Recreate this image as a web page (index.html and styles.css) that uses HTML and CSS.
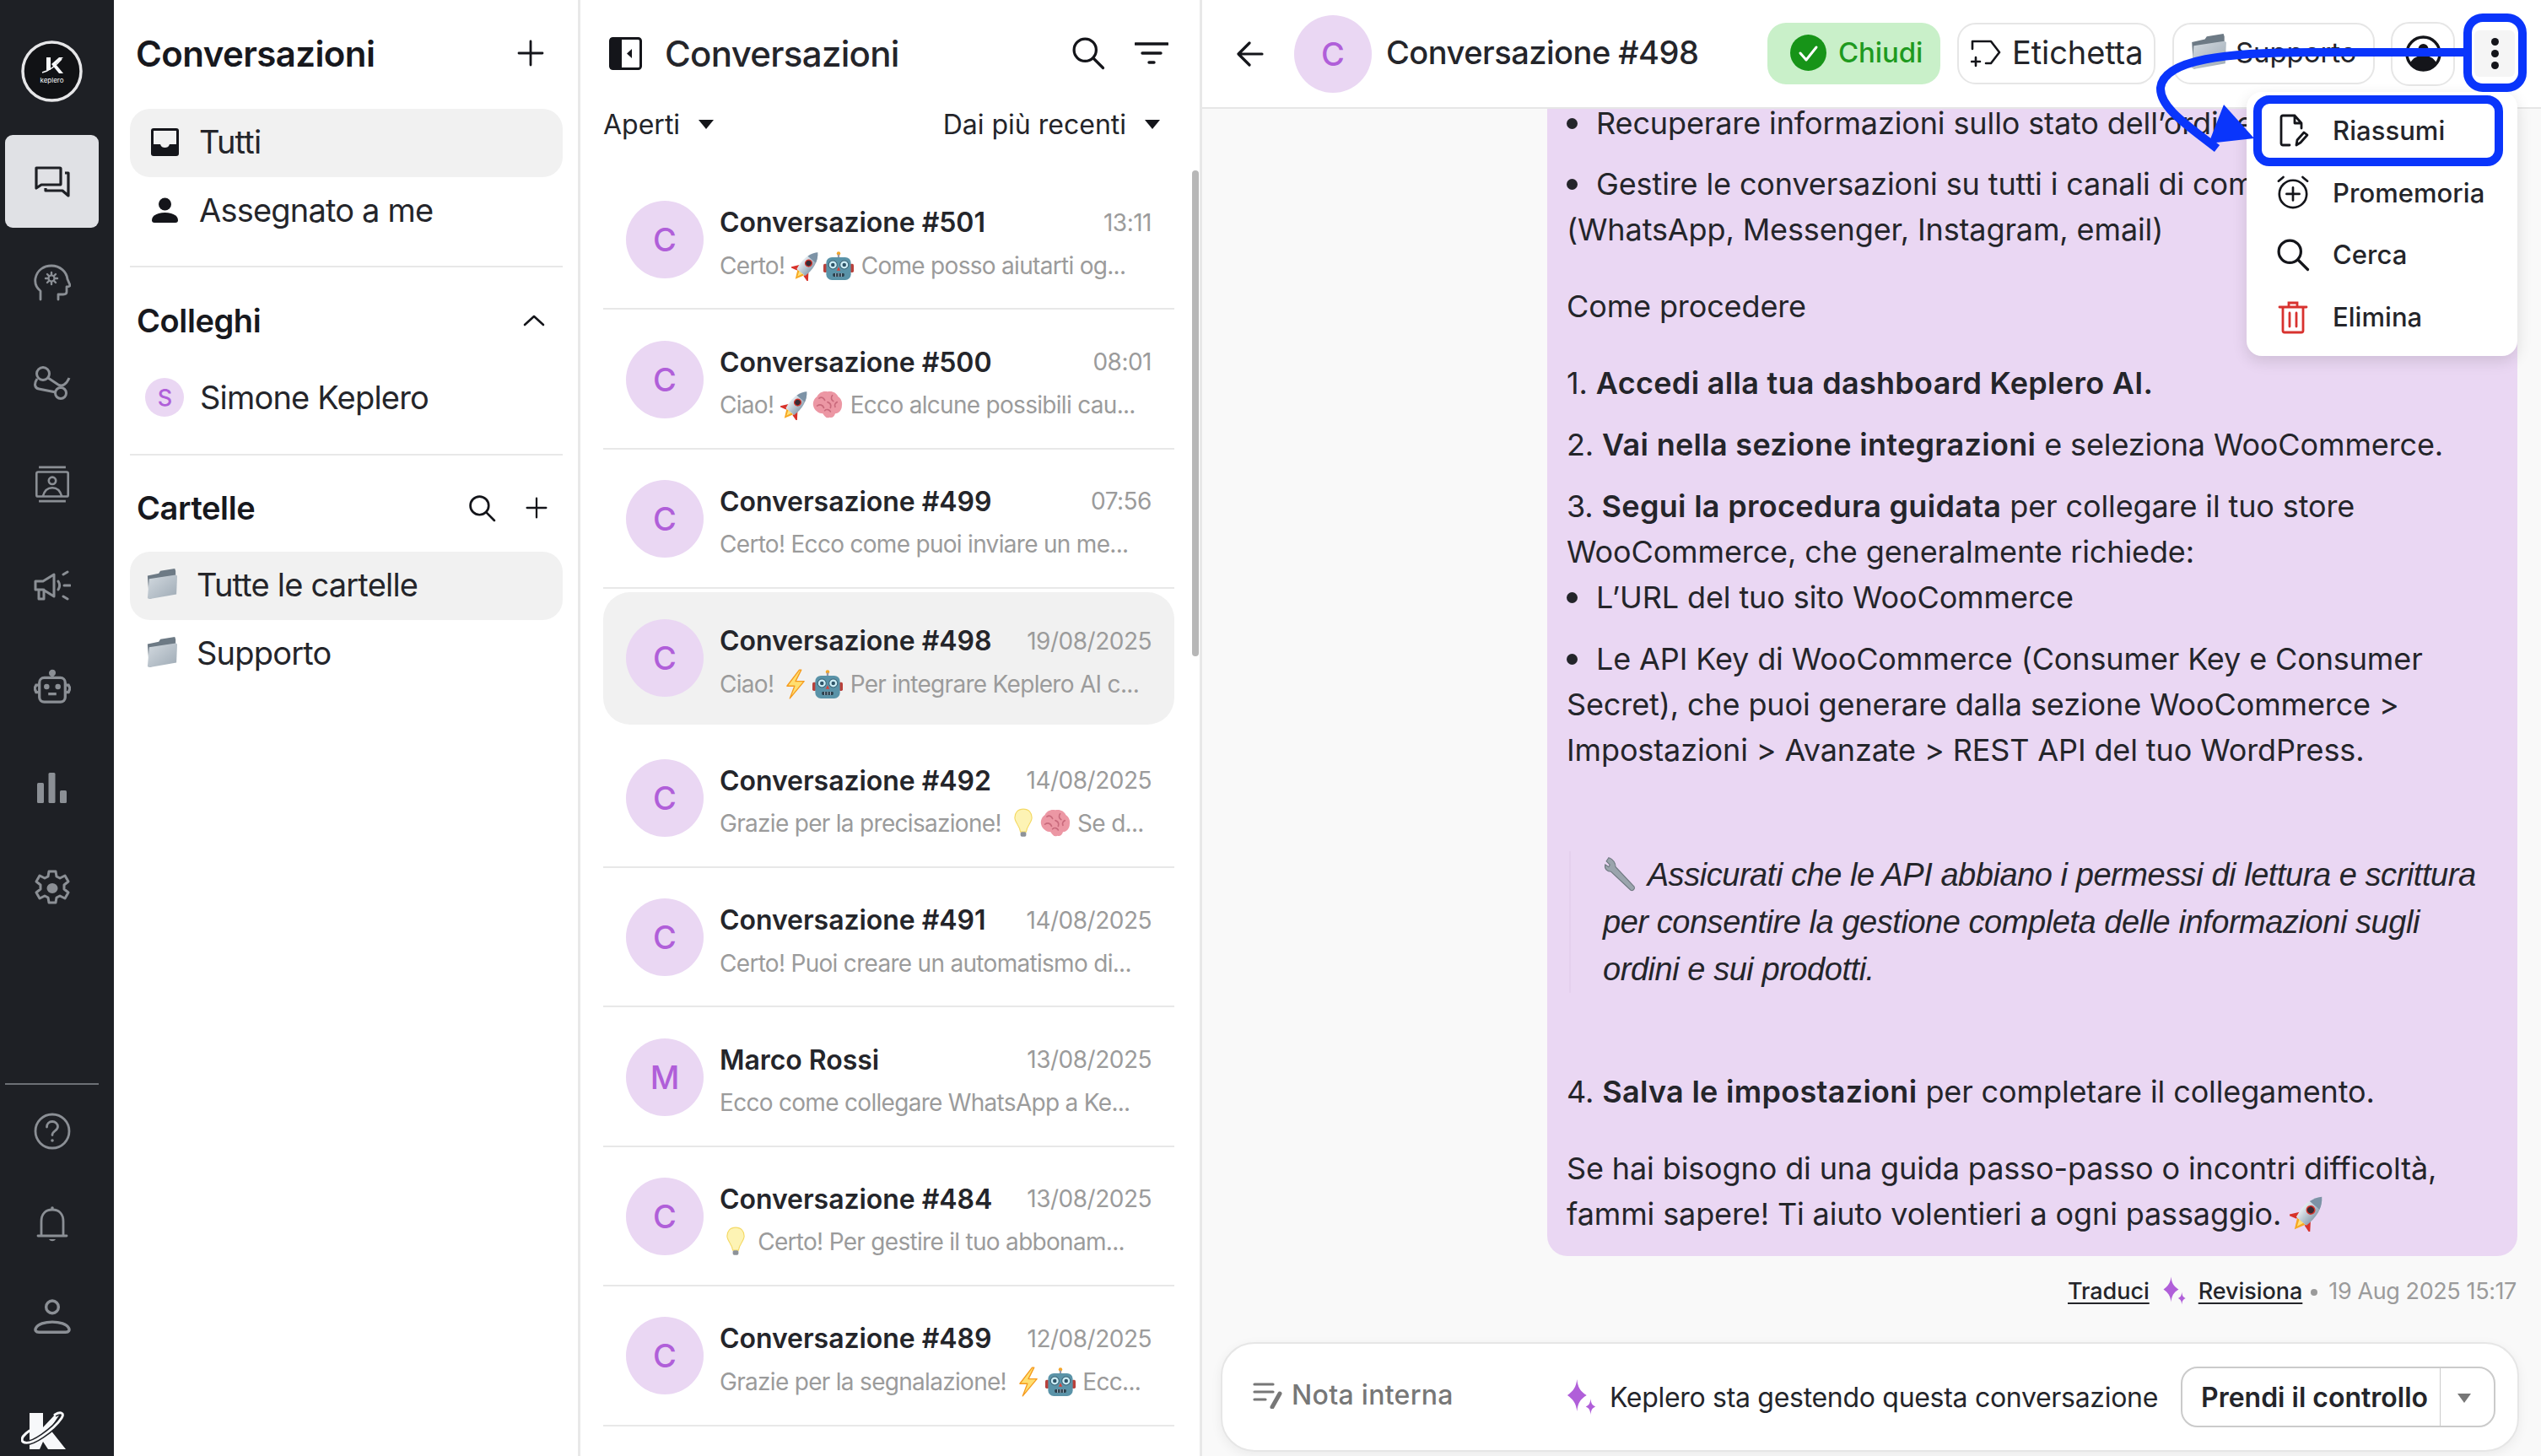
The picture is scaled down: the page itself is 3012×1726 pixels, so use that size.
FILE: index.html
```html
<!DOCTYPE html>
<html lang="it">
<head>
<meta charset="utf-8">
<title>Conversazioni</title>
<link rel="stylesheet" href="styles.css">
</head>
<body>
<svg class="defs" width="0" height="0" aria-hidden="true">
  <defs>
    <linearGradient id="fg" x1="0" y1="0" x2="1" y2="1"><stop offset="0" stop-color="#d3dae0"/><stop offset="1" stop-color="#9eaab5"/></linearGradient>
    <linearGradient id="rk" x1="0" y1="0" x2="1" y2="0"><stop offset="0" stop-color="#e6ecf1"/><stop offset="1" stop-color="#8fa3b3"/></linearGradient>
    <symbol id="folder" viewBox="0 0 40 40"><path d="M2 9l14-3 2-3 18-3 1 3v25L4 38z" fill="#6d7a85"/><path d="M4 13l33-5 2 1-1 23-33 6-3-1z" fill="url(#fg)"/></symbol>
    <symbol id="rocket" viewBox="2 2 28 28"><g transform="rotate(40 16 16)"><path d="M11 19l-6 8 7-2zM21 19l6 8-7-2z" fill="#d8322a"/><path d="M12 24h8l-4 8z" fill="#f7a823"/><path d="M14 24h4l-2 5z" fill="#ffe27a"/><path d="M16 0c6 6 7 15 5 24H11C9 15 10 6 16 0z" fill="url(#rk)"/><path d="M16 0c2.500 2.500 4 5.500 4.800 8.500H11.200C12 5.500 13.500 2.500 16 0z" fill="#7d93a6"/><circle cx="16" cy="13" r="3" fill="#3a2a33" stroke="#d8322a" stroke-width="1"/></g></symbol>
    <symbol id="robot" viewBox="0 0 32 32"><circle cx="16" cy="3" r="2" fill="#f4a62a"/><rect x="15" y="4" width="2" height="4" fill="#99a"/><rect x="0" y="14" width="4" height="9" rx="1.500" fill="#b9413b"/><rect x="28" y="14" width="4" height="9" rx="1.500" fill="#b9413b"/><rect x="3" y="7" width="26" height="24" rx="6" fill="#5a93a8"/><circle cx="10" cy="15" r="4.500" fill="#cdeef7" stroke="#3c6678"/><circle cx="22" cy="15" r="4.500" fill="#cdeef7" stroke="#3c6678"/><circle cx="10" cy="15" r="2" fill="#2f5568"/><circle cx="22" cy="15" r="2" fill="#2f5568"/><path d="M16 17l2 4h-4z" fill="#d8423a"/><rect x="10" y="24" width="12" height="3.500" rx="1" fill="#2b3f4b"/><path d="M13 24v3.500M16 24v3.500M19 24v3.500" stroke="#bcd" stroke-width=".8"/></symbol>
    <symbol id="brain" viewBox="0 0 32 32"><path d="M16 2c5-1 9 1 11 5 3 2 5 6 4 10 0 4-3 8-7 8-1 3-3 5-6 4-3 2-5-1-7-4-4 0-9-3-10-8-1-4 1-8 4-10 2-4 6-6 11-5z" fill="#ec97a4"/><path d="M7 9c3-2 5 0 6 2M21 6c-2 2-1 5 1 6M5 17c3-2 6-1 7 2M16 13c3 1 4 3 3 6M26 13c-2 1-3 3-2 5M13 22c2-2 5-1 6 1" stroke="#c96a7c" stroke-width="1.500" fill="none" stroke-linecap="round"/></symbol>
    <symbol id="bolt" viewBox="0 0 32 32"><path d="M20 1L7 18h8l-5 13 15-18h-9l6-12z" fill="#ffdf70" stroke="#f59b1f" stroke-width="1.200" stroke-linejoin="round"/></symbol>
    <symbol id="bulb" viewBox="0 0 32 32"><path d="M16 1c6 0 9 4 9 9 0 5-5 8-6 15h-6c-1-7-6-10-6-15 0-5 3-9 9-9z" fill="#fdf3b4" stroke="#f4d964" stroke-width="1"/><rect x="13" y="25" width="6" height="5" rx="1.500" fill="#8d9299"/></symbol>
    <symbol id="wrench" viewBox="0 0 32 32"><path d="M5 2L3 5l3 3-1 2-3-2c-1 4 2 6 5 6l17 16c2 1 4-1 3-3L11 10c0-3-2-7-6-8z" fill="#9aa4ac" stroke="#6f7880" stroke-width=".8"/></symbol>
    <symbol id="sparkle" viewBox="0 0 40 44"><path d="M14 0c1 10 4 15 12 20-8 5-11 10-12 20C13 30 9 25 2 20 9 15 13 10 14 0z" fill="#b05fd9"/><path d="M31 24c.500 6 2 8 6 10-4 2-5.500 4-6 10-.500-6-2-8-6-10 4-2 5.500-4 6-10z" fill="#b05fd9"/></symbol>
    <symbol id="mag" viewBox="0 0 32 32"><circle cx="13" cy="13" r="10.500" fill="none" stroke="currentColor" stroke-width="2.600"/><path d="M21 21l9 9" stroke="currentColor" stroke-width="2.600" stroke-linecap="round"/></symbol>
    <symbol id="plus" viewBox="0 0 32 32"><path d="M16 2v28M2 16h28" stroke="currentColor" stroke-width="2.800" stroke-linecap="round"/></symbol>
  </defs>
</svg>

<div class="app">
  <nav class="rail">
    <div class="rail-logo">
      <svg class="ic-badge" viewBox="0 0 73 73"><circle cx="36.500" cy="36.500" r="34.500" fill="#111215" stroke="#e6e6e8" stroke-width="3.500"/><path d="M30 20h5v15h-5zM36 28l9-8h5l-9 8 9 11h-5z" fill="#f7f8fa"/><path d="M25 38c8-2 17-9 23-16" stroke="#f7f8fa" stroke-width="1.500" fill="none"/><text x="36.500" y="50" class="logo-word">keplero</text></svg>
    </div>
    <a class="rail-item rail-active"><svg class="ic" viewBox="0 0 44 38" fill="none" stroke="#1e2025" stroke-width="3.200" stroke-linejoin="round"><path d="M3 3h28a1 1 0 011 1v18a1 1 0 01-1 1H9l-6 4z"/><path d="M37 9h4v27l-7-6H14v-3"/></svg></a>
    <a class="rail-item"><svg class="ic" viewBox="0 0 44 44" fill="none" stroke="#8b8f95" stroke-width="2.800" stroke-linecap="round" stroke-linejoin="round"><path d="M8 42V32C3 28 1 23 2 17 4 7 12 2 21 2c10 0 18 7 19 16l3 7c0 2-2 2-4 2v6c0 3-2 3-4 3h-6v6"/><circle cx="21" cy="17" r="3.500" stroke-width="2.200"/><path d="M21 10v2.500M21 21.500V24M14 17h2.500M25.500 17H28M16 12l1.800 1.800M24.200 20.200L26 22M16 22l1.800-1.800M24.200 13.800L26 12" stroke-width="2.400"/></svg></a>
    <a class="rail-item"><svg class="ic" viewBox="0 0 44 40" fill="none" stroke="#8b8f95" stroke-width="3"><circle cx="11" cy="9" r="7.500"/><circle cx="32" cy="32" r="6.500"/><path d="M17 14l12 8c5 3 10-1 13-8M4 15c-4 6-3 11 2 12l20 4"/></svg></a>
    <a class="rail-item"><svg class="ic" viewBox="0 0 44 47" fill="none" stroke="#8b8f95" stroke-width="2.800"><path d="M5 2h34M5 45h34"/><rect x="2" y="8" width="40" height="31" rx="2"/><circle cx="22" cy="19" r="4.500"/><path d="M10 39c2-8 7-11 12-11s10 3 12 11"/></svg></a>
    <a class="rail-item"><svg class="ic" viewBox="0 0 44 36" fill="none" stroke="#8b8f95" stroke-width="3" stroke-linecap="round" stroke-linejoin="round"><path d="M2 13h9l13-8v26L11 23H2zM6 23v11h6v-11"/><path d="M29 13c2 3 2 7 0 10M35 5l5-3M36 18h7M35 31l5 3"/></svg></a>
    <a class="rail-item"><svg class="ic" viewBox="0 0 46 42" fill="none" stroke="#8b8f95" stroke-width="3.400"><rect x="7" y="10" width="32" height="30" rx="6"/><path d="M23 10V6" /><circle cx="23" cy="4" r="2.500" fill="#8b8f95"/><path d="M7 19H3l-2 4 2 5h4M39 19h4l2 4-2 5h-4M18 30h10"/><circle cx="16" cy="21" r="1.700" fill="#8b8f95"/><circle cx="30" cy="21" r="1.700" fill="#8b8f95"/></svg></a>
    <a class="rail-item"><svg class="ic ic-bars" viewBox="0 0 36 36" fill="#8b8f95"><rect x="0" y="12" width="8" height="24" rx="1.500"/><rect x="13.500" y="0" width="8" height="36" rx="1.500"/><rect x="27" y="21" width="8" height="15" rx="1.500"/></svg></a>
    <a class="rail-item"><svg class="ic" viewBox="0 0 44 44" fill="none" stroke="#8b8f95" stroke-width="3" stroke-linejoin="round"><path d="M18 2h8l1 6 4 2 6-3 4 7-5 4v5l5 4-4 7-6-3-4 2-1 6h-8l-1-6-4-2-6 3-4-7 5-4v-5l-5-4 4-7 6 3 4-2z"/><ellipse cx="22" cy="22" rx="6.500" ry="6" fill="#8b8f95" stroke="none"/></svg></a>
    <div class="rail-bottom">
      <div class="rail-rule"></div>
      <a class="rail-item"><svg class="ic" viewBox="0 0 44 44" fill="none" stroke="#8b8f95" stroke-width="2.800"><circle cx="22" cy="22" r="20"/><path d="M15.500 17c0-4 3-6.500 6.500-6.500s6.500 2.500 6.500 6c0 5-6.500 5-6.500 10" stroke-linecap="round"/><circle cx="22" cy="33" r="1.800" fill="#8b8f95" stroke="none"/></svg></a>
      <a class="rail-item"><svg class="ic" viewBox="0 0 36 44" fill="none" stroke="#8b8f95" stroke-width="2.800" stroke-linecap="round"><path d="M5 36V19C5 10 10 5 18 5s13 5 13 14v17M1 36h34"/><circle cx="18" cy="3" r="1.800" fill="#8b8f95" stroke="none"/><path d="M14 40c2 3 6 3 8 0z" fill="#8b8f95" stroke="none"/></svg></a>
      <a class="rail-item"><svg class="ic" viewBox="0 0 36 34" fill="none" stroke="#8b8f95" stroke-width="2.800"><circle cx="18" cy="7.500" r="6"/><path d="M5 32h26c3 0 4-2 3-4-2-4-9-6-16-6S4 24 2 28c-1 2 0 4 3 4z"/></svg></a>
      <svg class="ic-k" viewBox="0 0 53 46"><path d="M10 3h16v17L42 3h5L34 22l19 24H32L26 37l-4 9H10z" fill="#f7f8fa"/><path d="M2 37c9 7 38-16 46-28 4-6-1-8-8-4" fill="none" stroke="#1e2025" stroke-width="6"/><path d="M2 37c9 7 38-16 46-28 4-6-1-8-8-4M2 37c-3-4 2-9 8-13" fill="none" stroke="#f7f8fa" stroke-width="3" stroke-linecap="round"/></svg>
    </div>
  </nav>

  <aside class="side">
    <div class="side-head"><h1 class="h-main">Conversazioni</h1><svg class="i30"><use href="#plus"/></svg></div>
    <div class="side-row side-on"><svg class="i-inbox" viewBox="0 0 33 33"><path d="M3 0h27a3 3 0 013 3v27a3 3 0 01-3 3H3a3 3 0 01-3-3V3a3 3 0 013-3z" fill="#14151a"/><path d="M3 3h27v16h-8c-1 3-3 4-5.500 4S12 22 11 19H3z" fill="#f1f1f1"/></svg><span>Tutti</span></div>
    <div class="side-row"><svg class="i-inbox" viewBox="0 0 33 33"><circle cx="16.500" cy="9" r="7.500" fill="#14151a"/><path d="M1 28c0-6 8-9 15.500-9S32 22 32 28c0 2-1 3-3 3H4c-2 0-3-1-3-3z" fill="#14151a"/></svg><span>Assegnato a me</span></div>
    <div class="side-rule"></div>
    <div class="side-sec"><h2 class="h-sec">Colleghi</h2><svg class="i-chev" viewBox="0 0 26 14"><path d="M2 12L13 2l11 10" fill="none" stroke="#14151a" stroke-width="2.600" stroke-linecap="round" stroke-linejoin="round"/></svg></div>
    <div class="side-row side-mate"><span class="mini-av">S</span><span>Simone Keplero</span></div>
    <div class="side-rule side-rule2"></div>
    <div class="side-sec"><h2 class="h-sec">Cartelle</h2><div class="sec-acts"><svg class="i34"><use href="#mag"/></svg><svg class="i26"><use href="#plus"/></svg></div></div>
    <div class="side-row side-on side-fold"><svg class="i-fold"><use href="#folder"/></svg><span>Tutte le cartelle</span></div>
    <div class="side-row side-fold"><svg class="i-fold"><use href="#folder"/></svg><span>Supporto</span></div>
  </aside>

  <section class="list">
    <div class="list-head">
      <svg class="i-panel" viewBox="0 0 39 39"><rect x="1.500" y="1.500" width="36" height="36" rx="3" fill="#fff" stroke="#14151a" stroke-width="3"/><rect x="1" y="1" width="14" height="37" rx="2" fill="#14151a"/><path d="M27 14l-6 5.500 6 5.500z" fill="#14151a"/></svg>
      <h2 class="h-list">Conversazioni</h2>
      <div class="list-acts"><svg class="i40"><use href="#mag"/></svg><svg class="i-filter" viewBox="0 0 40 26"><path d="M1 2h38M9 13h22M17 24h6" stroke="#14151a" stroke-width="3.400" stroke-linecap="round"/></svg></div>
    </div>
    <div class="list-filter">
      <span class="filter">Aperti<i class="caret"></i></span>
      <span class="filter">Dai più recenti<i class="caret"></i></span>
    </div>
    <div class="rows">
      <article class="row"><div class="row-in"><span class="av">C</span><div class="row-txt"><div class="row-top"><b>Conversazione #501</b><time>13:11</time></div><p>Certo! <svg class="em"><use href="#rocket"/></svg><svg class="em"><use href="#robot"/></svg> Come posso aiutarti og...</p></div></div></article>
      <article class="row"><div class="row-in"><span class="av">C</span><div class="row-txt"><div class="row-top"><b>Conversazione #500</b><time>08:01</time></div><p>Ciao! <svg class="em"><use href="#rocket"/></svg><svg class="em"><use href="#brain"/></svg> Ecco alcune possibili cau...</p></div></div></article>
      <article class="row"><div class="row-in"><span class="av">C</span><div class="row-txt"><div class="row-top"><b>Conversazione #499</b><time>07:56</time></div><p>Certo! Ecco come puoi inviare un me...</p></div></div></article>
      <article class="row row-sel"><div class="row-in"><span class="av">C</span><div class="row-txt"><div class="row-top"><b>Conversazione #498</b><time>19/08/2025</time></div><p>Ciao! <svg class="em"><use href="#bolt"/></svg><svg class="em"><use href="#robot"/></svg> Per integrare Keplero AI c...</p></div></div></article>
      <article class="row"><div class="row-in"><span class="av">C</span><div class="row-txt"><div class="row-top"><b>Conversazione #492</b><time>14/08/2025</time></div><p>Grazie per la precisazione! <svg class="em"><use href="#bulb"/></svg><svg class="em"><use href="#brain"/></svg> Se d...</p></div></div></article>
      <article class="row"><div class="row-in"><span class="av">C</span><div class="row-txt"><div class="row-top"><b>Conversazione #491</b><time>14/08/2025</time></div><p>Certo! Puoi creare un automatismo di...</p></div></div></article>
      <article class="row"><div class="row-in"><span class="av">M</span><div class="row-txt"><div class="row-top"><b>Marco Rossi</b><time>13/08/2025</time></div><p>Ecco come collegare WhatsApp a Ke...</p></div></div></article>
      <article class="row"><div class="row-in"><span class="av">C</span><div class="row-txt"><div class="row-top"><b>Conversazione #484</b><time>13/08/2025</time></div><p><svg class="em"><use href="#bulb"/></svg> Certo! Per gestire il tuo abbonam...</p></div></div></article>
      <article class="row"><div class="row-in"><span class="av">C</span><div class="row-txt"><div class="row-top"><b>Conversazione #489</b><time>12/08/2025</time></div><p>Grazie per la segnalazione! <svg class="em"><use href="#bolt"/></svg><svg class="em"><use href="#robot"/></svg> Ecc...</p></div></div></article>
    </div>
    <div class="scrollbar"></div>
  </section>

  <main class="main">
    <header class="top">
      <svg class="i-back" viewBox="0 0 32 30"><path d="M30 15H3M15 2L2 15l13 13" fill="none" stroke="#14151a" stroke-width="3.200" stroke-linecap="round" stroke-linejoin="round"/></svg>
      <span class="av">C</span>
      <h2 class="h-top">Conversazione #498</h2>
      <div class="top-acts">
        <span class="chip chip-ok"><svg class="i-check" viewBox="0 0 43 43"><circle cx="21.500" cy="21.500" r="21.500" fill="#179418"/><path d="M12 22l7 8 12-15" fill="none" stroke="#fff" stroke-width="3" stroke-linecap="round" stroke-linejoin="round"/></svg>Chiudi</span>
        <span class="chip chip-tag"><svg class="i-tag" viewBox="0 0 36 36" fill="none" stroke="#14151a" stroke-width="2.600" stroke-linecap="round" stroke-linejoin="round"><path d="M2 14V5h22l10 13-10 13h-6M6 24v10M1 29h10"/></svg>Etichetta</span>
        <span class="chip chip-fold"><svg class="i-foldtop"><use href="#folder"/></svg>Supporto</span>
        <span class="chip chip-user"><svg class="i-user" viewBox="0 0 43 43"><circle cx="21.500" cy="21.500" r="19.500" fill="#fff" stroke="#14151a" stroke-width="3.400"/><circle cx="21.500" cy="16" r="6" fill="#14151a"/><path d="M6 33c3-7 9-9 15.500-9S34 26 37 33c-4 6-10 8-15.500 8S10 39 6 33z" fill="#14151a"/></svg></span>
        <span class="kebab"><i></i><i></i><i></i></span>
      </div>
    </header>
    <div class="chat">
      <div class="bubble">
        <p class="li">Recuperare informazioni sullo stato dell’ordine</p>
        <p class="li gap">Gestire le conversazioni su tutti i canali di comunicazione<br><span class="noli">(WhatsApp, Messenger, Instagram, email)</span></p>
        <p class="gap">Come procedere</p>
        <p class="tight"><span>1.</span> <strong>Accedi alla tua dashboard Keplero AI.</strong></p>
        <p class="tight"><span>2.</span> <strong>Vai nella sezione integrazioni</strong> e seleziona WooCommerce.</p>
        <p class="nom"><span>3.</span> <strong>Segui la procedura guidata</strong> per collegare il tuo store<br>WooCommerce, che generalmente richiede:</p>
        <p class="li tight">L’URL del tuo sito WooCommerce</p>
        <p class="li">Le API Key di WooCommerce (Consumer Key e Consumer<br><span class="noli">Secret), che puoi generare dalla sezione WooCommerce &gt;</span><br><span class="noli">Impostazioni &gt; Avanzate &gt; REST API del tuo WordPress.</span></p>
        <blockquote class="quote"><svg class="em-q"><use href="#wrench"/></svg> Assicurati che le API abbiano i permessi di lettura e scrittura<br>per consentire la gestione completa delle informazioni sugli<br>ordini e sui prodotti.</blockquote>
        <p class="gap"><span>4.</span> <strong>Salva le impostazioni</strong> per completare il collegamento.</p>
        <p>Se hai bisogno di una guida passo-passo o incontri difficoltà,<br>fammi sapere! Ti aiuto volentieri a ogni passaggio. <svg class="em-b"><use href="#rocket"/></svg></p>
      </div>
      <div class="meta"><a class="lnk">Traduci</a><svg class="i-spark"><use href="#sparkle"/></svg><a class="lnk">Revisiona</a><i class="dot"></i><span>19 Aug 2025 15:17</span></div>
      <div class="composer">
        <span class="note"><svg class="i-note" viewBox="0 0 36 32" fill="none" stroke="#777" stroke-width="3.200" stroke-linecap="round"><path d="M2 3h22M2 12h22M2 21h13"/><path d="M32 14L23 30" stroke-width="5"/></svg>Nota interna</span>
        <span class="kep"><svg class="i-spark2"><use href="#sparkle"/></svg>Keplero sta gestendo questa conversazione</span>
        <span class="take"><b>Prendi il controllo</b><i class="take-sep"></i><i class="take-caret"></i></span>
      </div>
    </div>
  </main>
</div>

<div class="menu">
  <div class="menu-row"><svg class="i-menu" viewBox="0 0 36 40" fill="none" stroke="#14151a" stroke-width="2.800" stroke-linecap="round" stroke-linejoin="round"><path d="M14 37H6a2 2 0 01-2-2V4a2 2 0 012-2h14l8 9v6M20 2v9h8"/><path d="M22 37l1-6 8-9 4 3-8 9z"/></svg>Riassumi</div>
  <div class="menu-row"><svg class="i-menu" viewBox="0 0 40 42" fill="none" stroke="#14151a" stroke-width="2.800" stroke-linecap="round"><circle cx="20" cy="23" r="17"/><path d="M20 15v16M12 23h16M2 7l6-5M38 7l-6-5"/></svg>Promemoria</div>
  <div class="menu-row"><svg class="i-menu i-menu-s"><use href="#mag"/></svg>Cerca</div>
  <div class="menu-row"><svg class="i-menu" viewBox="0 0 36 40" fill="none" stroke="#d8322f" stroke-width="2.800" stroke-linecap="round"><path d="M6 9v27a2 2 0 002 2h20a2 2 0 002-2V9M2 8h32M13 7V3h10v4M14 15v16M22 15v16"/></svg>Elimina</div>
</div>

<svg class="annot" viewBox="0 0 3012 440" aria-hidden="true">
  <path d="M2925 62H2740C2640 62 2565 70 2561 104C2560 128 2595 150 2628 176" fill="none" stroke="#0a35fb" stroke-width="10"/>
  <path d="M2636 124L2672 164L2618 170Z" fill="#0a35fb"/>
  <rect x="2925" y="21" width="65" height="83" rx="18" fill="none" stroke="#0a35fb" stroke-width="10"/>
  <rect x="2676" y="118" width="286" height="74" rx="14" fill="none" stroke="#0a35fb" stroke-width="10"/>
</svg>
</body>
</html>
```
FILE: styles.css
```css
* { box-sizing: border-box; }
html, body { margin: 0; height: 100%; }
body {
  position: relative;
  width: 3012px;
  height: 1726px;
  overflow: hidden;
  font-family: Inter, "Noto Sans", sans-serif;
  color: #24252a;
  background: #fff;
}
h1, h2, p { margin: 0; font-weight: 500; }
.defs { position: absolute; }
.app { display: flex; width: 3012px; height: 1726px; }

/* rail */
.rail {
  flex: 0 0 135px;
  background: #1e2025;
  padding: 48px 18px 0 6px;
  display: flex;
  flex-direction: column;
  gap: 9.8px;
}
.rail-logo { height: 102px; padding-left: 19px; flex: none; }
.ic-badge { width: 73px; height: 73px; display: block; }
.logo-word { font-size: 8px; fill: #f7f8fa; text-anchor: middle; font-family: Inter, sans-serif; }
.rail-item {
  height: 110px;
  flex: none;
  display: flex;
  align-items: center;
  justify-content: center;
  border-radius: 9px;
}
.rail-active { background: #e0e1e5; }
.ic { width: 44px; height: 44px; }
.ic-bars { width: 36px; height: 36px; }
.rail-bottom { margin-top: auto; display: flex; flex-direction: column; }
.rail-rule { height: 2px; background: #6c7076; flex: none; }
.ic-k { width: 53px; height: 46px; margin: 56px 0 8px 19px; flex: none; }

/* side */
.side {
  flex: 0 0 553px;
  border-right: 3px solid #e8e8e8;
  padding: 0 18px 0 19px;
  display: flex;
  flex-direction: column;
}
.side-head { height: 129px; display: flex; align-items: center; justify-content: space-between; padding: 0 22px 3px 7px; flex: none; }
.h-main { font-size: 42px; font-weight: 600; letter-spacing: -.6px; color: #17181d; }
.i30 { width: 32px; height: 32px; color: #14151a; }
.side-row {
  height: 81px;
  flex: none;
  display: flex;
  align-items: center;
  gap: 24px;
  padding: 0 0 3px 25px;
  border-radius: 24px;
  font-size: 38px;
  letter-spacing: -.8px;
}
.side-on { background: #f1f1f1; }
.i-inbox { width: 33px; height: 33px; }
.side-rule { height: 2px; background: #e8e8e8; margin-top: 24px; flex: none; }
.side-rule2 { margin-top: 25px; }
.side-sec { height: 60px; margin-top: 34px; display: flex; align-items: center; justify-content: space-between; padding: 0 18px 2px 8px; flex: none; }
.side-sec + .side-row { margin-top: 21px; }
.side-rule2 + .side-sec { margin-top: 33px; }
.h-sec { font-size: 38px; font-weight: 600; letter-spacing: -.4px; color: #17181d; }
.i-chev { width: 26px; height: 14px; margin-right: 3px; }
.sec-acts { display: flex; align-items: center; gap: 35px; color: #14151a; }
.i34 { width: 33px; height: 33px; }
.i26 { width: 26px; height: 26px; }
.mini-av { width: 46px; height: 46px; border-radius: 50%; background: #ead7f3; color: #b05fd9; font-size: 27px; font-weight: 500; display: flex; align-items: center; justify-content: center; margin: 0 -5px 0 -7px; }
.side-fold { gap: 22px; padding-left: 19px; }
.i-fold { width: 38px; height: 38px; }

/* list */
.list { flex: 0 0 737px; border-right: 3px solid #e8e8e8; padding: 0 30px 0 27px; position: relative; display: flex; flex-direction: column; }
.list-head { height: 126px; display: flex; align-items: center; padding-left: 7px; flex: none; }
.i-panel { width: 39px; height: 39px; margin-right: 27px; }
.h-list { font-size: 42px; letter-spacing: -.7px; }
.list-acts { margin-left: auto; display: flex; align-items: center; gap: 35px; color: #14151a; padding-right: 7px; }
.i40 { width: 40px; height: 40px; }
.i-filter { width: 40px; height: 26px; }
.list-filter { height: 42px; margin-bottom: 34px; flex: none; display: flex; justify-content: space-between; align-items: center; font-size: 32px; padding: 0 17px 0 0; }
.filter { display: flex; align-items: center; }
.caret { width: 0; height: 0; border: 9px solid transparent; border-top: 11px solid #14151a; border-bottom: 0; margin-left: 22px; }
.rows { flex: none; }
.row { height: 165.4px; border-bottom: 2px solid #e8e8e8; padding: 4px 0 3px; }
.row-in { display: flex; align-items: center; height: 100%; padding: 0 27px; border-radius: 32px; gap: 19px; }
.row-sel { border-bottom-color: #fff; }
.row-sel .row-in { background: #f1f1f1; }
.av { flex: none; width: 92px; height: 92px; border-radius: 50%; background: #ead7f3; color: #b05fd9; font-size: 38px; font-weight: 500; display: flex; align-items: center; justify-content: center; }
.row-txt { flex: 1; min-width: 0; padding-top: 10px; }
.row-top { display: flex; justify-content: space-between; align-items: center; height: 40px; }
.row-top b { font-size: 32px; font-weight: 600; letter-spacing: -.05px; color: #24252a; }
.row-top time { font-size: 28px; color: #9b9b9b; letter-spacing: -.5px; }
.row-txt p { height: 40px; line-height: 40px; margin-top: 11px; font-size: 28px; color: #9b9b9b; letter-spacing: -.7px; white-space: nowrap; font-weight: 400; }
.em { width: 36px; height: 36px; vertical-align: -8px; margin: 0 1px; }
.scrollbar { position: absolute; left: 725px; top: 202px; width: 8px; height: 576px; border-radius: 4px; background: #b7b7b7; }

/* main */
.main { flex: 1; min-width: 0; display: flex; flex-direction: column; }
.top { height: 129px; flex: none; border-bottom: 2px solid #e6e6e6; display: flex; align-items: center; padding: 0 31px 0 41px; }
.i-back { width: 32px; height: 30px; margin-right: 36px; }
.h-top { font-size: 38px; margin: 0 0 4px 17px; letter-spacing: -.5px; color: #24252a; }
.top-acts { margin-left: auto; display: flex; align-items: center; gap: 20px; }
.chip { height: 73px; border: 2px solid #e6e6e6; border-radius: 22px; display: flex; align-items: center; font-size: 38px; letter-spacing: -.1px; padding-bottom: 3px; }
.chip-ok { width: 205px; background: #c9f0c9; border: 0; color: #1f9a1f; font-size: 33px; font-weight: 500; padding-left: 27px; gap: 14px; }
.i-check { width: 43px; height: 43px; }
.chip-tag { width: 235px; padding-left: 14px; gap: 13px; }
.i-tag { width: 36px; height: 36px; }
.chip-fold { width: 240px; padding-left: 19px; gap: 10px; font-size: 33px; }
.i-foldtop { width: 44px; height: 44px; }
.chip-user { width: 76px; height: 76px; justify-content: center; margin-left: -1px; padding-bottom: 0; }
.i-user { width: 43px; height: 43px; }
.kebab { width: 48px; height: 55px; margin-left: 3px; background: #f5f5f5; border-radius: 6px; display: flex; flex-direction: column; align-items: center; justify-content: center; gap: 5px; }
.kebab i { width: 9px; height: 9px; border-radius: 50%; background: #14151a; }

.chat { flex: 1; min-height: 0; overflow: hidden; background: #f9f9f9; display: flex; flex-direction: column; justify-content: flex-end; }
.bubble { flex: none; align-self: flex-end; width: 1150px; margin-right: 28px; background: #ead7f3; border-radius: 0 0 24px 24px; padding: 40px 0 23px 23px; font-size: 36px; line-height: 54px; letter-spacing: -.12px; white-space: nowrap; color: #24252a; }
.bubble p { font-weight: 400; margin-bottom: 37px; }
.bubble p:last-child { margin-bottom: 0; }
.bubble strong { font-weight: 600; letter-spacing: .3px; }
.bubble .li { margin-bottom: 18px; }
.bubble .li::before { content: ""; display: inline-block; width: 13px; height: 13px; border-radius: 50%; background: #24252a; margin: 0 22px 5px 0; vertical-align: middle; }
.bubble .tight { margin-bottom: 19px; }
.bubble .nom { margin-bottom: 0; }
.bubble .gap { margin-bottom: 37px; }
.quote { margin: 93px 0 90px 3px; padding: 0 0 0 38px; border-left: 2px solid #e4d0ed; font-family: "Liberation Sans", sans-serif; font-style: italic; font-size: 38px; line-height: 56px; letter-spacing: -.45px; }
.em-q { width: 44px; height: 44px; vertical-align: -8px; }
.em-b { width: 44px; height: 44px; vertical-align: -8px; }
.meta { flex: none; height: 82px; margin-bottom: 20px; padding-right: 29px; display: flex; justify-content: flex-end; align-items: center; font-size: 27px; color: #9b9b9b; letter-spacing: -.4px; }
.lnk { color: #24252a; font-weight: 500; letter-spacing: -.05px; text-decoration: underline; text-underline-offset: 4px; }
.i-spark { width: 30px; height: 34px; margin: 0 13px 0 15px; }
.dot { width: 8px; height: 8px; border-radius: 50%; background: #9b9b9b; margin: 4px 13px 0 10px; }
.composer { flex: none; height: 130px; margin: 0 26px 5px 22px; background: #fff; border: 2px solid #e6e6e6; border-radius: 40px; box-shadow: 0 4px 14px rgba(0,0,0,.06); display: flex; align-items: center; padding: 0 26px 0 36px; }
.note { display: flex; align-items: center; gap: 10px; font-size: 32px; font-weight: 500; color: #777; letter-spacing: .3px; padding-bottom: 5px; }
.i-note { width: 36px; height: 32px; }
.kep { margin-left: auto; display: flex; align-items: center; font-size: 32px; letter-spacing: -.3px; margin-right: 27px; }
.i-spark2 { width: 38px; height: 42px; margin-right: 14px; }
.take { width: 373px; height: 72px; border: 2px solid #cbcbcb; border-radius: 20px; display: flex; align-items: center; position: relative; padding-left: 22px; font-size: 32px; letter-spacing: 0; }
.take b { font-weight: 600; }
.take-sep { position: absolute; left: 305px; top: 0; bottom: 0; width: 1px; background: #cbcbcb; }
.take-caret { position: absolute; left: 326px; top: 30px; width: 0; height: 0; border: 8px solid transparent; border-top: 11px solid #777; border-bottom: 0; }

/* overlay */
.menu { position: absolute; left: 2663px; top: 109px; width: 321px; height: 313px; background: #fff; border-radius: 18px; box-shadow: 0 6px 18px rgba(0,0,0,.12); padding-top: 9px; display: flex; flex-direction: column; }
.menu-row { height: 73.6px; flex: none; display: flex; align-items: center; padding-left: 35px; gap: 27px; font-size: 31px; font-weight: 500; letter-spacing: .05px; color: #24252a; }
.i-menu { width: 40px; height: 40px; flex: none; }
.i-menu-s { color: #14151a; }
.annot { position: absolute; left: 0; top: 0; width: 3012px; height: 440px; pointer-events: none; }
```
